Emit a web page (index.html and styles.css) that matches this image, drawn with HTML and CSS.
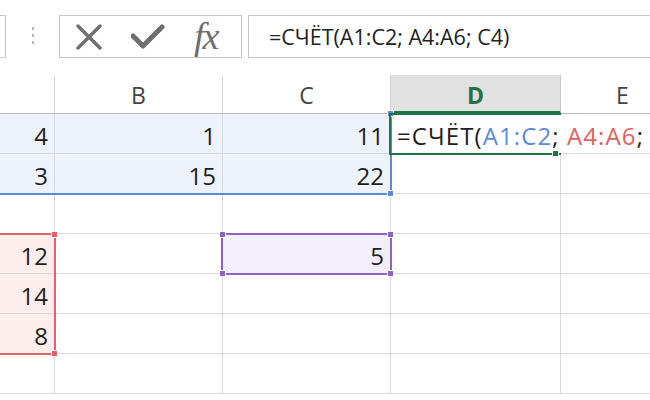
FILE: index.html
```html
<!DOCTYPE html>
<html lang="ru">
<head>
<meta charset="utf-8">
<link rel="stylesheet" href="styles.css">
</head>
<body>
<div class="app">
  <div class="fbar">
    <div class="namebox"></div>
    <div class="grip"><span></span><span></span><span></span></div>
    <div class="btns">
      <svg class="ic ic-x" width="28" height="26" viewBox="0 0 28 26"><path d="M3 2 L25 24 M25 2 L3 24" stroke="#6e6e6e" stroke-width="3.4" fill="none" stroke-linecap="round"/></svg>
      <svg class="ic ic-ok" width="34" height="26" viewBox="0 0 34 26"><path d="M2 12 L12 22 L31 3" stroke="#6e6e6e" stroke-width="5" fill="none" stroke-linejoin="round" stroke-linecap="round"/></svg>
      <span class="fx">fx</span>
    </div>
    <div class="finput">=СЧЁТ(A1:C2; A4:A6; C4)</div>
  </div>

  <div class="sheet">
    <div class="grid">
      <div class="hd"></div>
      <div class="hd">B</div>
      <div class="hd">C</div>
      <div class="hd hd-act">D</div>
      <div class="hd hd-last">E</div>

      <div class="c blue">4</div>
      <div class="c blue">1</div>
      <div class="c blue">11</div>
      <div class="c edit"><span class="etext">=СЧЁТ(<span class="t-blue">A1:C2</span>; <span class="t-red">A4:A6</span>;</span></div>

      <div class="c blue">3</div>
      <div class="c blue">15</div>
      <div class="c blue">22</div>
      <div class="c"></div>
      <div class="c"></div>

      <div class="c"></div><div class="c"></div><div class="c"></div><div class="c"></div><div class="c"></div>

      <div class="c red">12</div>
      <div class="c"></div>
      <div class="c purple">5</div>
      <div class="c"></div>
      <div class="c"></div>

      <div class="c red">14</div>
      <div class="c"></div><div class="c"></div><div class="c"></div><div class="c"></div>

      <div class="c red">8</div>
      <div class="c"></div><div class="c"></div><div class="c"></div><div class="c"></div>

      <div class="c"></div><div class="c"></div><div class="c"></div><div class="c"></div><div class="c"></div>
    </div>

    <div class="rng rng-blue"><i class="h h-tr"></i><i class="h h-br"></i></div>
    <div class="rng rng-red"><i class="h h-tr"></i><i class="h h-br"></i></div>
    <div class="rng rng-purple"><i class="h h-tl"></i><i class="h h-tr"></i><i class="h h-bl"></i><i class="h h-br"></i></div>
    <div class="active"><i class="h h-br"></i></div>
  </div>
</div>
</body>
</html>
```
FILE: styles.css
```css
html, body {
  margin: 0;
  padding: 0;
  background: #ffffff;
}
body {
  width: 650px;
  height: 400px;
  overflow: hidden;
  font-family: "Open Sans", "Liberation Sans", sans-serif;
}
.app {
  width: 650px;
  height: 400px;
  overflow: hidden;
}

/* formula bar */
.fbar {
  height: 75px;
  display: flex;
  align-items: flex-start;
  padding-top: 15px;
  box-sizing: border-box;
}
.namebox {
  width: 6px;
  height: 43px;
  box-sizing: border-box;
  border: 1px solid #c6c6c6;
  border-left: none;
}
.grip {
  margin-left: 26px;
  margin-top: 12px;
  display: flex;
  flex-direction: column;
  gap: 4px;
}
.grip span {
  width: 2px;
  height: 3px;
  background: #b4b4b4;
}
.btns {
  margin-left: 25px;
  width: 183px;
  height: 43px;
  box-sizing: border-box;
  border: 1px solid #c6c6c6;
  display: flex;
  align-items: center;
  padding-left: 15px;
}
.ic-x { margin-top: 1px; }
.ic-ok { margin-left: 28px; margin-top: 1px; }
.fx {
  margin-left: 29px;
  font-family: "Liberation Serif", serif;
  font-style: italic;
  font-size: 38px;
  color: #6e6e6e;
  line-height: 1;
  margin-top: -2px;
  letter-spacing: -2px;
}
.finput {
  margin-left: 6px;
  flex: 1;
  height: 43px;
  box-sizing: border-box;
  border: 1px solid #c6c6c6;
  border-right: none;
  padding-left: 20px;
  font-size: 21.5px;
  line-height: 41px;
  color: #222222;
  white-space: nowrap;
}

/* sheet */
.sheet {
  position: relative;
  height: 325px;
}
.grid {
  display: grid;
  grid-template-columns: 55px 168px 168px 170px 90px;
  grid-template-rows: 39px repeat(7, 40px);
}
.hd {
  box-sizing: border-box;
  border-right: 1px solid #d4d4d4;
  border-bottom: 1px solid #b8b8b8;
  background: #ffffff;
  font-size: 23px;
  color: #444444;
  display: flex;
  align-items: center;
  justify-content: center;
  padding-top: 2px;
}
.hd-last { justify-content: flex-start; padding-left: 55px; }
.hd-act {
  background: #e1e1e1;
  color: #217346;
  font-weight: 700;
  border-bottom: 3px solid #217346;
  border-right-color: #c8c8c8;
  padding-top: 4px;
}
.c {
  box-sizing: border-box;
  border-right: 1px solid #d9d9d9;
  border-bottom: 1px solid #d9d9d9;
  font-size: 24px;
  color: #1e1e1e;
  display: flex;
  align-items: center;
  justify-content: flex-end;
  padding-right: 6px;
  padding-top: 3px;
  white-space: nowrap;
}
.blue { background: #eef2fa; }
.red { background: #fdeeee; }
.purple { background: #f2eefa; }
.edit {
  grid-column: span 2;
  justify-content: flex-start;
  padding-left: 6px;
  background: #ffffff;
}
.etext {
  white-space: pre;
  letter-spacing: 1.1px;
}
.t-blue { color: #5b8ad8; }
.t-red { color: #e06060; }

/* range overlays */
.rng {
  position: absolute;
  box-sizing: border-box;
}
.rng-blue {
  left: -10px; top: 38px; width: 402px; height: 82px;
  border: 2px solid #5b8ad8;
  border-top: none;
}
.rng-red {
  left: -10px; top: 158px; width: 66px; height: 122px;
  border: 2px solid #e06464;
}
.rng-purple {
  left: 221px; top: 158px; width: 171px; height: 42px;
  border: 2px solid #8e62c4;
}
.active {
  position: absolute;
  box-sizing: border-box;
  left: 389px; top: 38px; width: 172px; height: 42px;
  border: 2px solid #217346;
  border-right: none;
}
.h {
  position: absolute;
  width: 7px;
  height: 7px;
  box-sizing: border-box;
  border: 1px solid #ffffff;
}
.rng-blue .h { background: #5b8ad8; }
.rng-red .h { background: #e06464; }
.rng-purple .h { background: #8e62c4; }
.active .h { background: #217346; }
.h-tl { left: -4px; top: -4px; }
.h-tr { right: -4px; top: -4px; }
.h-bl { left: -4px; bottom: -4px; }
.h-br { right: -4px; bottom: -4px; }
.rng-blue .h-tr { top: -3px; }
.active .h-br { right: 2px; bottom: -4px; }
```
